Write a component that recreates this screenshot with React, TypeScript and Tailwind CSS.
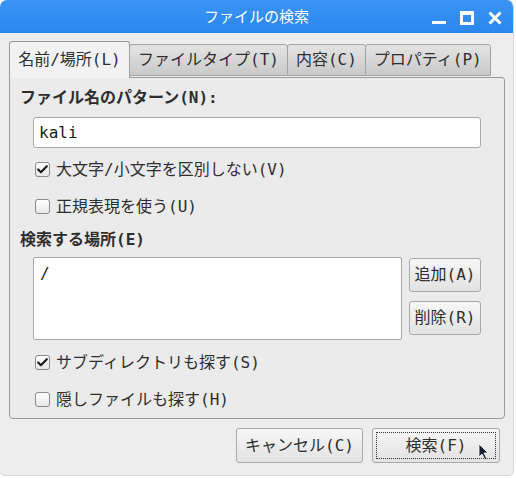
import { Check } from "lucide-react";

const font = { fontFamily: '"DejaVu Sans Mono", "Noto Sans CJK JP", monospace' };

function Checkbox({ checked, label }: { checked?: boolean; label: string }) {
    return (
        <div className="flex items-center h-[37px] pl-[15px]">
            <div className="w-[15px] h-[15px] rounded-[3px] border border-[#8a8a8a] bg-gradient-to-b from-white to-[#e8e8e8] flex items-center justify-center">
                {checked && <Check className="w-[13px] h-[13px] text-[#1a1a1a]" strokeWidth={4} />}
            </div>
            <span className="ml-[6px] text-[16px] text-[#2e2e2e]">{label}</span>
        </div>
    );
}

function Button({ label, className = "", focus }: { label: string; className?: string; focus?: boolean }) {
    return (
        <div
            className={`rounded-[3px] border border-[#a8a8a8] bg-gradient-to-b from-[#f7f7f7] to-[#e2e2e2] flex items-center justify-center text-[16px] text-[#2e2e2e] ${className}`}
        >
            {focus ? (
                <div className="m-[3px] flex-1 self-stretch border border-dotted border-[#333] flex items-center justify-center relative">
                    {label}
                    <svg className="absolute right-[5px] top-[10px]" width="12" height="18" viewBox="0 0 12 18">
                        <path d="M1 1 L1 14 L4 11 L7 17 L9 16 L6 10 L10 10 Z" fill="#1b1b2e" stroke="#ffffff" strokeWidth="0.8" />
                    </svg>
                </div>
            ) : (
                label
            )}
        </div>
    );
}

const tabs = ["ファイルタイプ(T)", "内容(C)", "プロパティ(P)"];

export default function App() {
    return (
        <div className="w-[516px] h-[478px] bg-white" style={font}>
            <div className="w-[514px] h-[476px] rounded-t-[7px] rounded-b-[5px] bg-[#ededed] border-r border-b border-[#d8d8d8] flex flex-col overflow-hidden">
                <div className="relative h-[33px] shrink-0 bg-gradient-to-b from-[#3b95f6] to-[#2a86ee] flex items-center justify-center">
                    <span className="text-[15px] text-white" style={{ fontFamily: '"Noto Sans CJK JP", sans-serif' }}>
                        ファイルの検索
                    </span>
                    <div className="absolute right-[11px] top-[11px] flex items-center gap-[14px]">
                        <div className="w-[14px] h-[14px] flex items-end pb-[1px]">
                            <div className="w-[14px] h-[3px] bg-white" />
                        </div>
                        <div className="w-[14px] h-[14px] border-[3px] border-white border-t-[4px]" />
                        <svg width="14" height="14" viewBox="0 0 14 14">
                            <path d="M1.5 1.5 L12.5 12.5 M12.5 1.5 L1.5 12.5" stroke="white" strokeWidth="3" />
                        </svg>
                    </div>
                </div>
                <div className="pl-[9px] pr-[8px] pt-[8px] flex flex-col">
                    <div className="flex items-end h-[36px] relative z-10">
                        <div className="h-[37px] w-[121px] rounded-t-[3px] border border-b-0 border-[#9a9a9a] bg-[#f2f2f2] flex items-center justify-center text-[16px] text-[#2e2e2e] -mb-[1px]">
                            名前/場所(L)
                        </div>
                        {tabs.map((t) => (
                            <div
                                key={t}
                                className="h-[32px] px-[8px] rounded-t-[3px] border border-[#a2a2a2] bg-gradient-to-b from-[#e4e4e4] to-[#c9c9c9] flex items-center text-[16px] text-[#2e2e2e] mb-[1px] -ml-[1px]"
                            >
                                {t}
                            </div>
                        ))}
                    </div>
                    <div className="h-[342px] border border-[#9a9a9a] rounded-b-[4px] rounded-tr-[3px] bg-[#ebebeb] flex flex-col pl-[10px] pr-[23px] pt-[9px]">
                        <div className="text-[16px] font-bold text-[#2e2e2e] h-[22px] leading-[22px]">ファイル名のパターン(N):</div>
                        <div className="ml-[13px] mt-[8px] h-[33px] rounded-[3px] border border-[#a8a8a8] bg-white flex items-center pl-[5px] text-[16px] text-[#1a1a1a]">
                            kali
                        </div>
                        <div className="mt-[3px]">
                            <Checkbox checked label="大文字/小文字を区別しない(V)" />
                            <Checkbox label="正規表現を使う(U)" />
                        </div>
                        <div className="text-[16px] font-bold text-[#2e2e2e] h-[22px] leading-[22px] mt-[4px]">検索する場所(E)</div>
                        <div className="flex mt-[6px] ml-[13px]">
                            <div className="flex-1 h-[83px] border border-[#a8a8a8] rounded-[2px] bg-white pl-[6px] pt-[4px] text-[16px] text-[#1a1a1a]">
                                /
                            </div>
                            <div className="ml-[7px] flex flex-col gap-[9px] pt-[1px]">
                                <Button label="追加(A)" className="w-[72px] h-[34px]" />
                                <Button label="削除(R)" className="w-[72px] h-[34px]" />
                            </div>
                        </div>
                        <div className="mt-[4px]">
                            <Checkbox checked label="サブディレクトリも探す(S)" />
                            <Checkbox label="隠しファイルも探す(H)" />
                        </div>
                    </div>
                    <div className="flex justify-end gap-[9px] mt-[9px] pr-[5px]">
                        <Button label="キャンセル(C)" className="w-[127px] h-[35px]" />
                        <Button label="検索(F)" className="w-[128px] h-[35px]" focus />
                    </div>
                </div>
            </div>
        </div>
    );
}
